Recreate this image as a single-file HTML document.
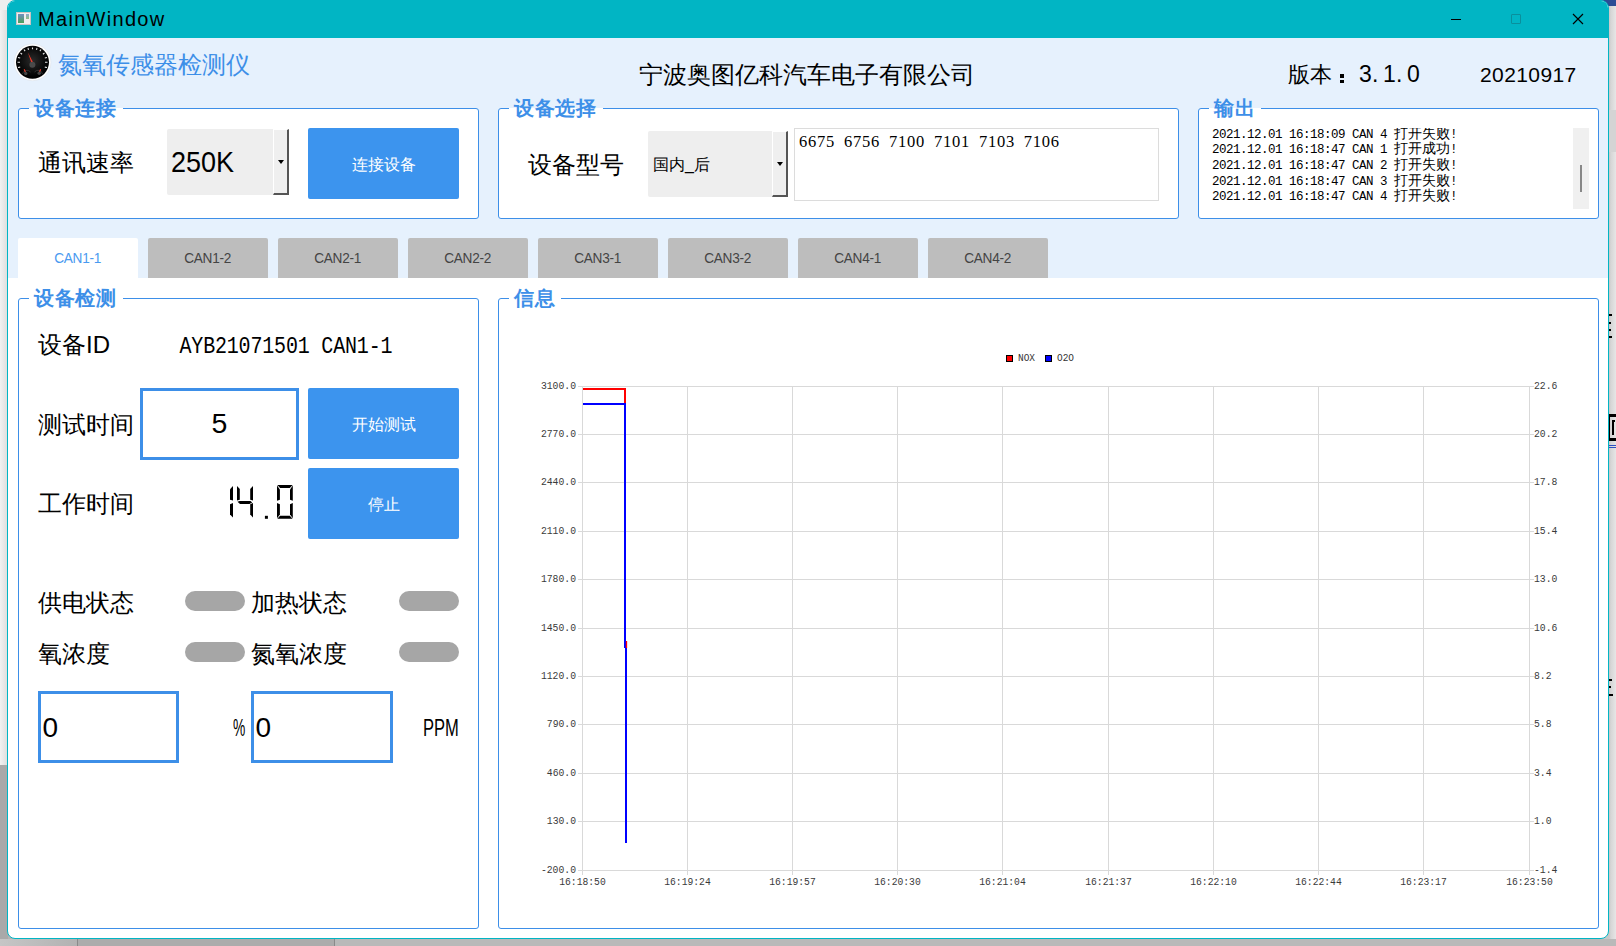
<!DOCTYPE html>
<html><head><meta charset="utf-8">
<style>
*{margin:0;padding:0;box-sizing:border-box}
html,body{width:1616px;height:946px;overflow:hidden;background:#b4b4b4;font-family:"Liberation Sans",sans-serif}
.abs{position:absolute}
#win{position:absolute;left:7px;top:0;width:1602px;height:939px;border:1px solid #01b5c4;border-radius:8px 8px 8px 8px;background:#fff;overflow:hidden}
#title{position:absolute;left:0;top:0;width:1600px;height:37px;background:#01b5c4}
#body{position:absolute;left:0;top:37px;width:1600px;height:240px;background:#e6f1fd}
.gb{position:absolute;border:1px solid #3d8fe8;border-radius:3px;background:#fff}
.gbt{position:absolute;top:-11px;left:10px;padding:0 6px 0 5px;font-size:20px;font-weight:bold;color:#3d8fe8;line-height:20px;letter-spacing:0.7px;white-space:nowrap}
.lbl{position:absolute;margin-top:1px;font-size:24px;line-height:24px;color:#000;white-space:nowrap}
.btn{position:absolute;padding-top:4px;background:#3c94ee;border-radius:2px;color:#fff;font-size:16px;display:flex;align-items:center;justify-content:center}
.combo{position:absolute;background:#eeeeee;border-radius:2px}
.arrowbtn{position:absolute;top:0;right:0;width:16px;height:100%;background:#efefef;border-left:1px solid #fff;border-top:1px solid #fff;border-right:2px solid #555;border-bottom:2px solid #555}
.arrowbtn:after{content:"";position:absolute;left:3.5px;top:50%;margin-top:-2px;border-left:3.6px solid transparent;border-right:3.6px solid transparent;border-top:4px solid #000}
.tab{position:absolute;top:238px;width:120px;height:40px;background:#bdbdbd;border-radius:2px 2px 0 0;color:#444;font-size:14px;text-align:center;line-height:40px;letter-spacing:-0.3px}
.tab span{display:inline-block;transform:scaleX(0.88);font-size:15.5px}
.pill{position:absolute;width:60px;height:20px;border-radius:10px;background:#a6a6a6}
.cj{font-size:14px;letter-spacing:0}
.logl{position:absolute;left:2px;height:16px;font-family:"Liberation Mono",monospace;font-size:12.5px;line-height:16px;letter-spacing:-0.5px;color:#000;white-space:pre}
.tbox{position:absolute;border:3px solid #3d8fe8;background:#fff}
</style></head><body>
<!-- desktop bits -->
<div class="abs" style="left:0;top:0;width:8px;height:765px;background:linear-gradient(90deg,#f2f2f2,#dcdcdc)"></div>
<div class="abs" style="left:0;top:765px;width:8px;height:181px;background:#a9a9a9"></div>
<div class="abs" style="left:1600px;top:0;width:16px;height:946px;background:linear-gradient(90deg,#c8c8c8 0,#c8c8c8 9px,#d6d6d6 11px,#e6e6e6 16px)"></div>
<div class="abs" style="left:1600px;top:0;width:16px;height:6px;background:#2b4c95"></div>
<div class="abs" style="left:1600px;top:110px;width:16px;height:42px;background:#d4d4d4"></div>
<div class="abs" style="left:0;top:0;width:24px;height:10px;background:#efefef"></div>
<div class="abs" style="left:1609px;top:414px;width:7px;height:27px;border-top:3px solid #000;border-bottom:3px solid #000;border-left:1px solid #000"></div>
<div class="abs" style="left:1612px;top:420px;width:3px;height:15px;border-left:2px solid #000;border-top:2px solid #000"></div>
<div class="abs" style="left:1609px;top:445px;width:7px;height:1px;background:#3050c0"></div>
<div class="abs" style="left:1609px;top:447px;width:7px;height:1px;background:#3050c0"></div>
<div class="abs" style="left:1609px;top:314px;width:3px;height:2px;background:#000"></div>
<div class="abs" style="left:1609px;top:322px;width:1.5px;height:2px;background:#000"></div>
<div class="abs" style="left:1609px;top:329px;width:1.5px;height:2px;background:#000"></div>
<div class="abs" style="left:1609px;top:336px;width:3px;height:2px;background:#000"></div>
<div class="abs" style="left:1609px;top:679px;width:3px;height:2px;background:#000"></div>
<div class="abs" style="left:1609px;top:686px;width:1.5px;height:2px;background:#000"></div>
<div class="abs" style="left:1609px;top:694px;width:4px;height:2px;background:#000"></div>
<div class="abs" style="left:0;top:939px;width:1616px;height:7px;background:#b9b9b9"></div>
<div class="abs" style="left:0;top:939px;width:77px;height:7px;background:linear-gradient(90deg,#c6c6c6,#b2b2b2)"></div>
<div class="abs" style="left:77px;top:939px;width:1px;height:7px;background:#8a8a8a"></div>
<div class="abs" style="left:78px;top:939px;width:256px;height:7px;background:#acacac"></div>
<div class="abs" style="left:334px;top:939px;width:1px;height:7px;background:#8a8a8a"></div>

<div id="win">
  <div id="title"></div>
  <div id="body"></div>
</div>

<!-- title bar content -->
<div class="abs" style="left:16px;top:12px;width:15px;height:13px;background:#f0eeee;border:1px solid #c9c3c3"></div>
<div class="abs" style="left:18px;top:14px;width:6px;height:9px;background:linear-gradient(180deg,#6f8fc0,#4aa05a)"></div>
<div class="abs" style="left:26px;top:14px;width:3px;height:5px;background:linear-gradient(180deg,#8aa8d0,#8fc080)"></div>
<div class="abs" style="left:38px;top:7px;font-size:20px;line-height:24px;letter-spacing:1.3px;color:#000">MainWindow</div>
<div class="abs" style="left:1451px;top:19px;width:10px;height:1.4px;background:#000"></div>
<div class="abs" style="left:1511px;top:14px;width:10px;height:10px;border:1px solid #0a8f9c;border-radius:1px"></div>
<svg class="abs" style="left:1572px;top:13px" width="12" height="12" viewBox="0 0 12 12"><path d="M1 1L11 11M11 1L1 11" stroke="#000" stroke-width="1.15"/></svg>

<!-- header -->
<svg class="abs" style="left:13px;top:43px" width="39" height="39" viewBox="0 0 39 39">
 <defs><radialGradient id="gf" cx="50%" cy="45%" r="50%"><stop offset="0" stop-color="#2a2a2a"/><stop offset="1" stop-color="#000"/></radialGradient></defs>
 <circle cx="19.5" cy="19.3" r="18.4" fill="#fff" stroke="#dde3ea" stroke-width="0.6"/>
 <circle cx="19.5" cy="19.3" r="16.5" fill="url(#gf)"/>
 <g stroke="#e8e8e8" stroke-width="1.1">
  <path d="M4.5 19.3h2.5M32 19.3h2.5M5 14.5l2.2.5M34 14.5l-2.2.5M5 24.5l2.2-.4M34 24.5l-2.2-.4M7.5 10l1.6 1.3M31.5 10l-1.6 1.3M11 6.5l1.1 1.6M28 6.5l-1.1 1.6M15 5l.5 1.8M24 5l-.5 1.8M19.5 4.6v1.6"/>
 </g>
 <path d="M14.8 9.3 L18.6 20.5 L20.4 20 Z" fill="#f03a2a"/>
 <circle cx="19.4" cy="21.8" r="3" fill="#4a4a4a"/>
 <g fill="none" stroke="#3a3a3a" stroke-width="0.8"><path d="M9.5 31a4.5 4.5 0 0 1 8-2M21.5 29a4.5 4.5 0 0 1 8 2"/></g>
 <path d="M11.2 26.2 L12.8 30" stroke="#e83a2a" stroke-width="1.1"/>
 <path d="M27.6 26.2 L26.2 30" stroke="#e83a2a" stroke-width="1.1"/>
 <circle cx="12.7" cy="30.5" r="1.7" fill="#444"/>
 <circle cx="26.2" cy="30.3" r="1.7" fill="#444"/>
</svg>
<div class="abs" style="left:58px;top:52px;font-size:24px;line-height:26px;color:#3d8fe8;white-space:nowrap">氮氧传感器检测仪</div>
<div class="abs" style="left:639px;top:62px;font-size:24px;line-height:26px;color:#000;white-space:nowrap">宁波奥图亿科汽车电子有限公司</div>
<div class="abs" style="left:1288px;top:62px;font-size:22px;line-height:26px;color:#000;white-space:nowrap">版本</div>
<div class="abs" style="left:1340px;top:74px;width:4px;height:3.5px;background:#000"></div>
<div class="abs" style="left:1340px;top:79.5px;width:4px;height:3.5px;background:#000"></div>
<div class="abs" style="left:1359px;top:61px;font-size:23px;line-height:26px">3</div>
<div class="abs" style="left:1372px;top:61px;font-size:23px;line-height:26px">.</div>
<div class="abs" style="left:1383px;top:61px;font-size:23px;line-height:26px">1</div>
<div class="abs" style="left:1396px;top:61px;font-size:23px;line-height:26px">.</div>
<div class="abs" style="left:1407px;top:61px;font-size:23px;line-height:26px">0</div>
<div class="abs" style="left:1480px;top:62px;font-size:21px;line-height:26px;letter-spacing:0.4px;color:#000;white-space:nowrap">20210917</div>

<!-- groupbox 设备连接 -->
<div class="gb" style="left:18px;top:108px;width:461px;height:111px"><div class="gbt" style="background:linear-gradient(180deg,#e6f1fd 50%,#fff 50%)">设备连接</div></div>
<div class="lbl" style="left:38px;top:150px">通讯速率</div>
<div class="combo" style="left:167px;top:129px;width:122px;height:66px"><div style="position:absolute;left:4px;top:18px;font-size:30px;line-height:30px;transform:scaleX(0.9);transform-origin:left">250K</div><div class="arrowbtn"></div></div>
<div class="btn" style="left:308px;top:128px;width:151px;height:71px">连接设备</div>

<!-- groupbox 设备选择 -->
<div class="gb" style="left:498px;top:108px;width:681px;height:111px"><div class="gbt" style="background:linear-gradient(180deg,#e6f1fd 50%,#fff 50%)">设备选择</div></div>
<div class="lbl" style="left:528px;top:152px">设备型号</div>
<div class="combo" style="left:648px;top:131px;width:140px;height:66px"><div style="position:absolute;left:5px;top:24px;font-size:16px;line-height:20px">国内_后</div><div class="arrowbtn"></div></div>
<div class="abs" style="left:794px;top:128px;width:365px;height:73px;border:1px solid #dcdcdc;background:#fff"></div>
<div class="abs" style="left:799px;top:132px;font-family:'Liberation Serif',serif;font-size:16.5px;line-height:20px;letter-spacing:0.75px;word-spacing:4.1px;color:#000;white-space:pre">6675 6756 7100 7101 7103 7106</div>

<!-- groupbox 输出 -->
<div class="gb" style="left:1198px;top:108px;width:401px;height:111px"><div class="gbt" style="background:linear-gradient(180deg,#e6f1fd 50%,#fff 50%)">输出</div></div>
<div class="abs" style="left:1210px;top:128px;width:360px;height:80px;overflow:hidden">
<div class="logl" style="top:-2.2px">2021.12.01 16:18:09 CAN 4 <span class="cj">打开失败</span>!</div>
<div class="logl" style="top:13.4px">2021.12.01 16:18:47 CAN 1 <span class="cj">打开成功</span>!</div>
<div class="logl" style="top:29.0px">2021.12.01 16:18:47 CAN 2 <span class="cj">打开失败</span>!</div>
<div class="logl" style="top:44.6px">2021.12.01 16:18:47 CAN 3 <span class="cj">打开失败</span>!</div>
<div class="logl" style="top:60.2px">2021.12.01 16:18:47 CAN 4 <span class="cj">打开失败</span>!</div>
</div>
<div class="abs" style="left:1573px;top:128px;width:16px;height:81px;background:#f0f0f0"></div>
<div class="abs" style="left:1580px;top:165px;width:2px;height:27px;background:#888"></div>

<!-- tabs -->
<div class="tab" style="left:18px;background:#fff;color:#4a9af0"><span>CAN1-1</span></div>
<div class="tab" style="left:148px"><span>CAN1-2</span></div>
<div class="tab" style="left:278px"><span>CAN2-1</span></div>
<div class="tab" style="left:408px"><span>CAN2-2</span></div>
<div class="tab" style="left:538px"><span>CAN3-1</span></div>
<div class="tab" style="left:668px"><span>CAN3-2</span></div>
<div class="tab" style="left:798px"><span>CAN4-1</span></div>
<div class="tab" style="left:928px"><span>CAN4-2</span></div>

<!-- groupbox 设备检测 -->
<div class="gb" style="left:18px;top:298px;width:461px;height:631px"><div class="gbt" style="background:#fff">设备检测</div></div>
<div class="lbl" style="left:38px;top:332px">设备ID</div>
<div class="abs" style="left:179.5px;top:333px;font-family:'Liberation Mono',monospace;font-size:20px;line-height:24px;letter-spacing:-0.18px;transform:scaleY(1.17);transform-origin:top;white-space:pre">AYB21071501 CAN1-1</div>
<div class="lbl" style="left:38px;top:412px">测试时间</div>
<div class="tbox" style="left:140px;top:388px;width:159px;height:72px"><div style="position:absolute;left:0;width:100%;top:17px;text-align:center;font-size:28.5px;line-height:30px">5</div></div>
<div class="btn" style="left:308px;top:388px;width:151px;height:71px">开始测试</div>
<div class="lbl" style="left:38px;top:491px">工作时间</div>
<svg class="abs" style="left:220px;top:478px" width="80" height="48" viewBox="0 0 80 48"><g fill="#000"><polygon points="10,11.2 13,8.1 13,22.6 10,21.8"/><polygon points="10,26.2 13,25.1 13,39.6 10,36.5"/><polygon points="17,8.1 19.8,10.9 19.8,21.8 17,22.6"/><polygon points="17.5,23.8 19.5,23.1 30.5,23.1 32.2,24.4 29.5,25.9 20,25.9"/><polygon points="30.2,10.9 33,8.1 33,22.6 30.2,21.8"/><polygon points="30.2,26.2 33,25.1 33,39.6 30.2,36.5"/><polygon points="44.9,37.8 47.9,37.8 47.9,40.8 44.9,40.8"/><polygon points="57.3,7.1 72.6,7.1 69.8,9.9 60.1,9.9"/><polygon points="57,7.6 59.9,11.4 59.9,21.8 57,22.8"/><polygon points="70,11.4 72.8,7.6 72.8,22.8 70,21.8"/><polygon points="57,24.9 59.9,26.2 59.9,36.5 57,40.2"/><polygon points="70,26.2 72.8,24.9 72.8,40.2 70,36.5"/><polygon points="57.3,40.8 60.1,37.8 69.8,37.8 72.6,40.8"/></g></svg>
<div class="btn" style="left:308px;top:468px;width:151px;height:71px">停止</div>

<div class="lbl" style="left:38px;top:590px">供电状态</div>
<div class="pill" style="left:185px;top:591px"></div>
<div class="lbl" style="left:251px;top:590px">加热状态</div>
<div class="pill" style="left:399px;top:591px"></div>
<div class="lbl" style="left:38px;top:641px">氧浓度</div>
<div class="pill" style="left:185px;top:642px"></div>
<div class="lbl" style="left:251px;top:641px">氮氧浓度</div>
<div class="pill" style="left:399px;top:642px"></div>

<div class="tbox" style="left:38px;top:691px;width:141px;height:72px"><div style="position:absolute;left:1.5px;top:19px;font-size:28px;line-height:30px">0</div></div>
<div class="abs" style="left:233px;top:716px;font-size:23px;line-height:24px;transform:scaleX(0.6);transform-origin:left">%</div>
<div class="tbox" style="left:251px;top:691px;width:142px;height:72px"><div style="position:absolute;left:1.5px;top:19px;font-size:28px;line-height:30px">0</div></div>
<div class="abs" style="left:423px;top:716px;font-size:23px;line-height:24px;transform:scaleX(0.72);transform-origin:left">PPM</div>

<!-- groupbox 信息 -->
<div class="gb" style="left:498px;top:298px;width:1101px;height:631px"><div class="gbt" style="background:#fff">信息</div></div>

<svg class="abs" style="left:0;top:0" width="1616" height="946" viewBox="0 0 1616 946">
<path d="M578 386.5H1534M578 434.5H1534M578 482.5H1534M578 531.5H1534M578 579.5H1534M578 628.5H1534M578 676.5H1534M578 724.5H1534M578 773.5H1534M578 821.5H1534M578 870.5H1534M582.5 386V875M687.5 386V875M792.5 386V875M897.5 386V875M1002.5 386V875M1108.5 386V875M1213.5 386V875M1318.5 386V875M1423.5 386V875M1529.5 386V875" stroke="#d9d9d9" stroke-width="1" fill="none" shape-rendering="crispEdges"/>
<g font-family="Liberation Mono" font-size="11" fill="#3a3a3a"><text x="576" y="389.3" text-anchor="end" textLength="35.1" lengthAdjust="spacingAndGlyphs">3100.0</text><text x="1534" y="389.3" textLength="23.4" lengthAdjust="spacingAndGlyphs">22.6</text><text x="576" y="437.3" text-anchor="end" textLength="35.1" lengthAdjust="spacingAndGlyphs">2770.0</text><text x="1534" y="437.3" textLength="23.4" lengthAdjust="spacingAndGlyphs">20.2</text><text x="576" y="485.3" text-anchor="end" textLength="35.1" lengthAdjust="spacingAndGlyphs">2440.0</text><text x="1534" y="485.3" textLength="23.4" lengthAdjust="spacingAndGlyphs">17.8</text><text x="576" y="534.3" text-anchor="end" textLength="35.1" lengthAdjust="spacingAndGlyphs">2110.0</text><text x="1534" y="534.3" textLength="23.4" lengthAdjust="spacingAndGlyphs">15.4</text><text x="576" y="582.3" text-anchor="end" textLength="35.1" lengthAdjust="spacingAndGlyphs">1780.0</text><text x="1534" y="582.3" textLength="23.4" lengthAdjust="spacingAndGlyphs">13.0</text><text x="576" y="631.3" text-anchor="end" textLength="35.1" lengthAdjust="spacingAndGlyphs">1450.0</text><text x="1534" y="631.3" textLength="23.4" lengthAdjust="spacingAndGlyphs">10.6</text><text x="576" y="679.3" text-anchor="end" textLength="35.1" lengthAdjust="spacingAndGlyphs">1120.0</text><text x="1534" y="679.3" textLength="17.5" lengthAdjust="spacingAndGlyphs">8.2</text><text x="576" y="727.3" text-anchor="end" textLength="29.2" lengthAdjust="spacingAndGlyphs">790.0</text><text x="1534" y="727.3" textLength="17.5" lengthAdjust="spacingAndGlyphs">5.8</text><text x="576" y="776.3" text-anchor="end" textLength="29.2" lengthAdjust="spacingAndGlyphs">460.0</text><text x="1534" y="776.3" textLength="17.5" lengthAdjust="spacingAndGlyphs">3.4</text><text x="576" y="824.3" text-anchor="end" textLength="29.2" lengthAdjust="spacingAndGlyphs">130.0</text><text x="1534" y="824.3" textLength="17.5" lengthAdjust="spacingAndGlyphs">1.0</text><text x="576" y="873.3" text-anchor="end" textLength="35.1" lengthAdjust="spacingAndGlyphs">-200.0</text><text x="1534" y="873.3" textLength="23.4" lengthAdjust="spacingAndGlyphs">-1.4</text><text x="582.5" y="885" text-anchor="middle" textLength="46.5" lengthAdjust="spacingAndGlyphs">16:18:50</text><text x="687.5" y="885" text-anchor="middle" textLength="46.5" lengthAdjust="spacingAndGlyphs">16:19:24</text><text x="792.5" y="885" text-anchor="middle" textLength="46.5" lengthAdjust="spacingAndGlyphs">16:19:57</text><text x="897.5" y="885" text-anchor="middle" textLength="46.5" lengthAdjust="spacingAndGlyphs">16:20:30</text><text x="1002.5" y="885" text-anchor="middle" textLength="46.5" lengthAdjust="spacingAndGlyphs">16:21:04</text><text x="1108.5" y="885" text-anchor="middle" textLength="46.5" lengthAdjust="spacingAndGlyphs">16:21:37</text><text x="1213.5" y="885" text-anchor="middle" textLength="46.5" lengthAdjust="spacingAndGlyphs">16:22:10</text><text x="1318.5" y="885" text-anchor="middle" textLength="46.5" lengthAdjust="spacingAndGlyphs">16:22:44</text><text x="1423.5" y="885" text-anchor="middle" textLength="46.5" lengthAdjust="spacingAndGlyphs">16:23:17</text><text x="1529.5" y="885" text-anchor="middle" textLength="46.5" lengthAdjust="spacingAndGlyphs">16:23:50</text></g>
<path d="M583 389H625V404" stroke="#ff0000" stroke-width="2" fill="none"/>
<path d="M583 404H625V648" stroke="#0000ff" stroke-width="2" fill="none"/>
<path d="M626.5 641V648" stroke="#ff0000" stroke-width="1.3" fill="none"/>
<path d="M626 648V843" stroke="#0000ff" stroke-width="2" fill="none"/>
<rect x="1006.5" y="355.5" width="6" height="6" fill="#ff0000" stroke="#000" stroke-width="1"/>
<rect x="1045.5" y="355.5" width="6" height="6" fill="#0000ff" stroke="#000" stroke-width="1"/>
<g font-family="Liberation Mono" font-size="11" fill="#333"><text x="1018" y="361" textLength="17" lengthAdjust="spacingAndGlyphs">NOX</text><text x="1057" y="361" textLength="17" lengthAdjust="spacingAndGlyphs">O2O</text></g>
</svg>
</body></html>
